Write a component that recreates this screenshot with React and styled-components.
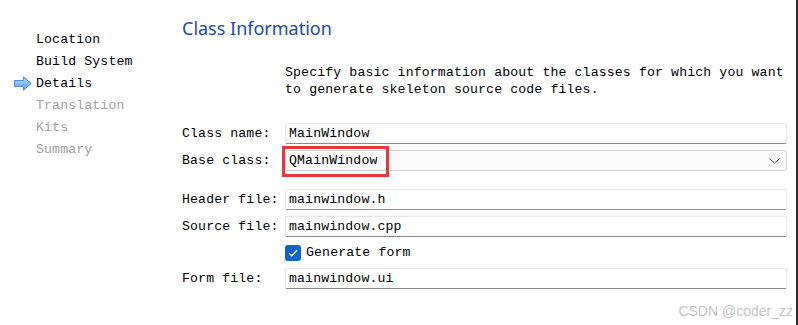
import React from "react";
import styled, { createGlobalStyle } from "styled-components";

const GlobalStyle = createGlobalStyle`
  html, body {
    margin: 0;
    padding: 0;
    background: #ffffff;
  }
`;

const mono = `"Liberation Mono", "DejaVu Sans Mono", monospace`;

const steps = [
  { name: "Location", state: "done" },
  { name: "Build System", state: "done" },
  { name: "Details", state: "current" },
  { name: "Translation", state: "todo" },
  { name: "Kits", state: "todo" },
  { name: "Summary", state: "todo" },
];

function ArrowIcon() {
  return (
    <svg width="18" height="15" viewBox="0 0 18 15">
      <defs>
        <linearGradient id="arrowFill" x1="0" y1="0" x2="0" y2="1">
          <stop offset="0" stopColor="#b9dcff" />
          <stop offset="1" stopColor="#5a9be8" />
        </linearGradient>
      </defs>
      <path
        d="M0.5 4.5 H9.5 V0.8 L17.2 7.5 L9.5 14.2 V10.5 H0.5 Z"
        fill="url(#arrowFill)"
        stroke="#4f8ad6"
        strokeWidth="1"
        strokeLinejoin="round"
      />
    </svg>
  );
}

function CheckIcon() {
  return (
    <svg width="10" height="8" viewBox="0 0 10 8">
      <path d="M1 4.2 L3.8 6.8 L9 1.2" fill="none" stroke="#fff" strokeWidth="1.3" />
    </svg>
  );
}

function ChevronIcon() {
  return (
    <svg width="11" height="6" viewBox="0 0 11 6">
      <path d="M0.5 0.5 L5.5 5 L10.5 0.5" fill="none" stroke="#444" strokeWidth="1" />
    </svg>
  );
}

export default function App() {
  return (
    <>
      <GlobalStyle />
      <Window>
        <Sidebar>
          {steps.map((s) => (
            <Step key={s.name} $state={s.state}>
              <Marker>{s.state === "current" && <ArrowIcon />}</Marker>
              {s.name}
            </Step>
          ))}
        </Sidebar>
        <Main>
          <Title>Class Information</Title>
          <Description>
            Specify basic information about the classes for which you want
            <br />
            to generate skeleton source code files.
          </Description>
          <Form>
            <Row>
              <Label>Class name:</Label>
              <Field>MainWindow</Field>
            </Row>
            <Row>
              <Label>Base class:</Label>
              <Combo>
                QMainWindow
                <ChevronIcon />
              </Combo>
              <Highlight />
            </Row>
            <Row $gapTop={12}>
              <Label>Header file:</Label>
              <Field>mainwindow.h</Field>
            </Row>
            <Row>
              <Label>Source file:</Label>
              <Field>mainwindow.cpp</Field>
            </Row>
            <CheckRow>
              <Label />
              <CheckBox>
                <CheckIcon />
              </CheckBox>
              <CheckText>Generate form</CheckText>
            </CheckRow>
            <Row>
              <Label>Form file:</Label>
              <Field>mainwindow.ui</Field>
            </Row>
          </Form>
        </Main>
        <Watermark>CSDN @coder_zz</Watermark>
      </Window>
    </>
  );
}

const Window = styled.div`
  position: relative;
  width: 798px;
  height: 325px;
  box-sizing: border-box;
  display: flex;
  background: #ffffff;
  border-right: 2px solid #2b2b2b;
  overflow: hidden;
`;

const Sidebar = styled.div`
  width: 182px;
  flex-shrink: 0;
  padding-top: 28px;
  display: flex;
  flex-direction: column;
`;

const Step = styled.div`
  display: flex;
  align-items: center;
  height: 22px;
  font-family: ${mono};
  font-size: 13.2px;
  letter-spacing: 0.13px;
  color: ${(p) => (p.$state === "todo" ? "#a0a0a0" : "#000000")};
`;

const Marker = styled.div`
  width: 36px;
  padding-left: 14px;
  box-sizing: border-box;
  display: flex;
  align-items: center;
`;

const Main = styled.div`
  flex: 1;
  display: flex;
  flex-direction: column;
  padding-top: 15px;
  padding-right: 9px;
`;

const Title = styled.div`
  font-family: "Segoe UI", "Noto Sans", "Open Sans", sans-serif;
  font-size: 18px;
  color: #1d4aa8;
  line-height: 26px;
`;

const Description = styled.div`
  margin-top: 23px;
  margin-left: 103px;
  font-family: ${mono};
  font-size: 13.2px;
  letter-spacing: 0.13px;
  line-height: 17px;
  color: #000;
`;

const Form = styled.div`
  margin-top: 25px;
  display: flex;
  flex-direction: column;
  gap: 6px;
`;

const Row = styled.div`
  position: relative;
  display: flex;
  align-items: center;
  margin-top: ${(p) => p.$gapTop || 0}px;
`;

const Label = styled.div`
  width: 103px;
  flex-shrink: 0;
  font-family: ${mono};
  font-size: 13.2px;
  letter-spacing: 0.13px;
  color: #000;
`;

const Field = styled.div`
  flex: 1;
  height: 21px;
  box-sizing: border-box;
  display: flex;
  align-items: center;
  padding: 0 3px;
  background: #ffffff;
  border: 1px solid #e6e6e6;
  border-bottom: 1px solid #8a8a8a;
  border-radius: 2px;
  font-family: ${mono};
  font-size: 13.2px;
  letter-spacing: 0.13px;
  color: #000;
`;

const Combo = styled(Field)`
  justify-content: space-between;
  padding-right: 6px;
  background: #fbfbfb;
  border: 1px solid #d0d0d0;
  border-radius: 3px;
`;

const Highlight = styled.div`
  position: absolute;
  left: 100px;
  top: -4px;
  width: 101px;
  height: 25px;
  border: 3px solid #e8363a;
  pointer-events: none;
`;

const CheckRow = styled.div`
  display: flex;
  align-items: center;
  height: 19px;
`;

const CheckBox = styled.div`
  width: 16px;
  height: 16px;
  border-radius: 3px;
  background: #1264c6;
  display: flex;
  align-items: center;
  justify-content: center;
`;

const CheckText = styled.div`
  margin-left: 5px;
  font-family: ${mono};
  font-size: 13.2px;
  letter-spacing: 0.13px;
  color: #000;
`;

const Watermark = styled.div`
  position: absolute;
  right: 3px;
  bottom: 6px;
  font-family: "Liberation Sans", Arial, sans-serif;
  font-size: 14px;
  color: #c4c4c4;
`;
